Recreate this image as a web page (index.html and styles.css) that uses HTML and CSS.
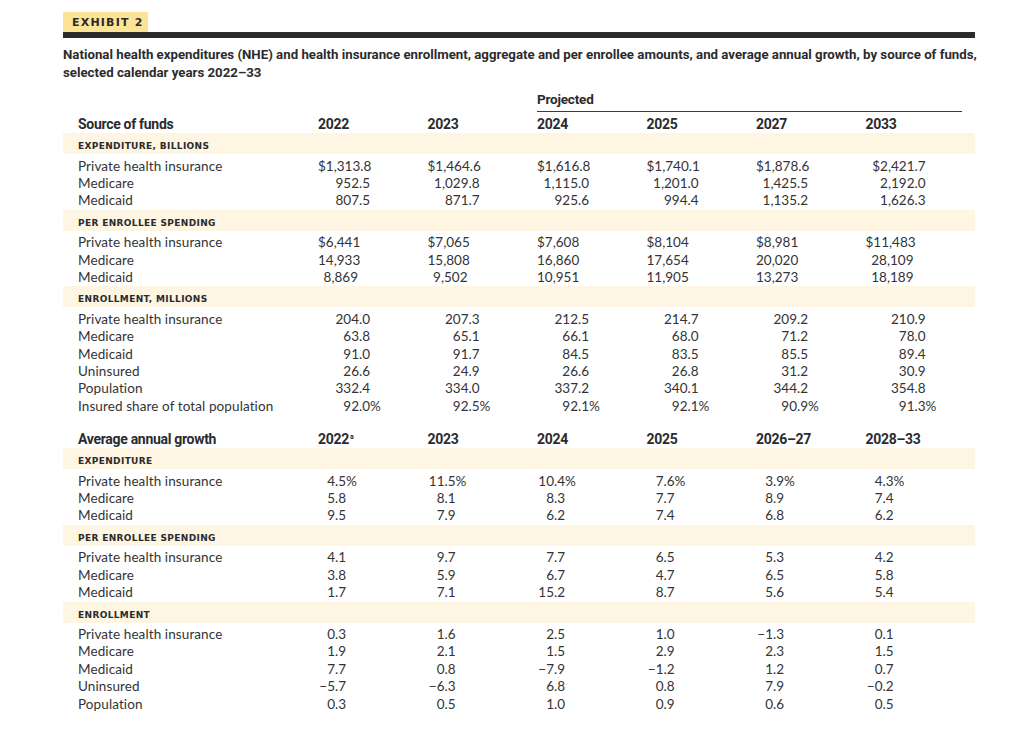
FILE: index.html
```html
<!DOCTYPE html>
<html>
<head>
<meta charset="utf-8">
<link rel="stylesheet" href="styles.css">
</head>
<body>
<div class="page">
  <div class="exhibit"><span class="tag">EXHIBIT 2</span></div>
  <div class="rule"></div>
  <h1 class="title">National health expenditures (NHE) and health insurance enrollment, aggregate and per enrollee amounts, and average annual growth, by source of funds,<br>selected calendar years 2022–33</h1>

  <div class="tbl">
    <div class="row proj"><span class="projected">Projected</span></div>
    <div class="row head"><span>Source of funds</span><span>2022</span><span>2023</span><span>2024</span><span>2025</span><span>2027</span><span>2033</span></div>

    <div class="band">EXPENDITURE, BILLIONS</div>
    <div class="sec dec">
      <div class="row"><span class="lbl">Private health insurance</span><span class="c"><span class="v">$1,313.8</span></span><span class="c"><span class="v">$1,464.6</span></span><span class="c"><span class="v">$1,616.8</span></span><span class="c"><span class="v">$1,740.1</span></span><span class="c"><span class="v">$1,878.6</span></span><span class="c"><span class="v">$2,421.7</span></span></div>
      <div class="row"><span class="lbl">Medicare</span><span class="c"><span class="v">952.5</span></span><span class="c"><span class="v">1,029.8</span></span><span class="c"><span class="v">1,115.0</span></span><span class="c"><span class="v">1,201.0</span></span><span class="c"><span class="v">1,425.5</span></span><span class="c"><span class="v">2,192.0</span></span></div>
      <div class="row"><span class="lbl">Medicaid</span><span class="c"><span class="v">807.5</span></span><span class="c"><span class="v">871.7</span></span><span class="c"><span class="v">925.6</span></span><span class="c"><span class="v">994.4</span></span><span class="c"><span class="v">1,135.2</span></span><span class="c"><span class="v">1,626.3</span></span></div>
    </div>

    <div class="band">PER ENROLLEE SPENDING</div>
    <div class="sec int">
      <div class="row"><span class="lbl">Private health insurance</span><span class="c"><span class="v">$6,441</span></span><span class="c"><span class="v">$7,065</span></span><span class="c"><span class="v">$7,608</span></span><span class="c"><span class="v">$8,104</span></span><span class="c"><span class="v">$8,981</span></span><span class="c"><span class="v">$11,483</span></span></div>
      <div class="row"><span class="lbl">Medicare</span><span class="c"><span class="v">14,933</span></span><span class="c"><span class="v">15,808</span></span><span class="c"><span class="v">16,860</span></span><span class="c"><span class="v">17,654</span></span><span class="c"><span class="v">20,020</span></span><span class="c"><span class="v">28,109</span></span></div>
      <div class="row"><span class="lbl">Medicaid</span><span class="c"><span class="v">8,869</span></span><span class="c"><span class="v">9,502</span></span><span class="c"><span class="v">10,951</span></span><span class="c"><span class="v">11,905</span></span><span class="c"><span class="v">13,273</span></span><span class="c"><span class="v">18,189</span></span></div>
    </div>

    <div class="band">ENROLLMENT, MILLIONS</div>
    <div class="sec dec">
      <div class="row"><span class="lbl">Private health insurance</span><span class="c"><span class="v">204.0</span></span><span class="c"><span class="v">207.3</span></span><span class="c"><span class="v">212.5</span></span><span class="c"><span class="v">214.7</span></span><span class="c"><span class="v">209.2</span></span><span class="c"><span class="v">210.9</span></span></div>
      <div class="row"><span class="lbl">Medicare</span><span class="c"><span class="v">63.8</span></span><span class="c"><span class="v">65.1</span></span><span class="c"><span class="v">66.1</span></span><span class="c"><span class="v">68.0</span></span><span class="c"><span class="v">71.2</span></span><span class="c"><span class="v">78.0</span></span></div>
      <div class="row"><span class="lbl">Medicaid</span><span class="c"><span class="v">91.0</span></span><span class="c"><span class="v">91.7</span></span><span class="c"><span class="v">84.5</span></span><span class="c"><span class="v">83.5</span></span><span class="c"><span class="v">85.5</span></span><span class="c"><span class="v">89.4</span></span></div>
      <div class="row"><span class="lbl">Uninsured</span><span class="c"><span class="v">26.6</span></span><span class="c"><span class="v">24.9</span></span><span class="c"><span class="v">26.6</span></span><span class="c"><span class="v">26.8</span></span><span class="c"><span class="v">31.2</span></span><span class="c"><span class="v">30.9</span></span></div>
      <div class="row"><span class="lbl">Population</span><span class="c"><span class="v">332.4</span></span><span class="c"><span class="v">334.0</span></span><span class="c"><span class="v">337.2</span></span><span class="c"><span class="v">340.1</span></span><span class="c"><span class="v">344.2</span></span><span class="c"><span class="v">354.8</span></span></div>
      <div class="row"><span class="lbl">Insured share of total population</span><span class="c"><span class="v">92.0</span>%</span><span class="c"><span class="v">92.5</span>%</span><span class="c"><span class="v">92.1</span>%</span><span class="c"><span class="v">92.1</span>%</span><span class="c"><span class="v">90.9</span>%</span><span class="c"><span class="v">91.3</span>%</span></div>
    </div>

    <div class="row head head2"><span>Average annual growth</span><span>2022<sup>a</sup></span><span>2023</span><span>2024</span><span>2025</span><span>2026–27</span><span>2028–33</span></div>

    <div class="band">EXPENDITURE</div>
    <div class="sec gr">
      <div class="row"><span class="lbl">Private health insurance</span><span class="c"><span class="v">4.5</span>%</span><span class="c"><span class="v">11.5</span>%</span><span class="c"><span class="v">10.4</span>%</span><span class="c"><span class="v">7.6</span>%</span><span class="c"><span class="v">3.9</span>%</span><span class="c"><span class="v">4.3</span>%</span></div>
      <div class="row"><span class="lbl">Medicare</span><span class="c"><span class="v">5.8</span></span><span class="c"><span class="v">8.1</span></span><span class="c"><span class="v">8.3</span></span><span class="c"><span class="v">7.7</span></span><span class="c"><span class="v">8.9</span></span><span class="c"><span class="v">7.4</span></span></div>
      <div class="row"><span class="lbl">Medicaid</span><span class="c"><span class="v">9.5</span></span><span class="c"><span class="v">7.9</span></span><span class="c"><span class="v">6.2</span></span><span class="c"><span class="v">7.4</span></span><span class="c"><span class="v">6.8</span></span><span class="c"><span class="v">6.2</span></span></div>
    </div>

    <div class="band">PER ENROLLEE SPENDING</div>
    <div class="sec gr">
      <div class="row"><span class="lbl">Private health insurance</span><span class="c"><span class="v">4.1</span></span><span class="c"><span class="v">9.7</span></span><span class="c"><span class="v">7.7</span></span><span class="c"><span class="v">6.5</span></span><span class="c"><span class="v">5.3</span></span><span class="c"><span class="v">4.2</span></span></div>
      <div class="row"><span class="lbl">Medicare</span><span class="c"><span class="v">3.8</span></span><span class="c"><span class="v">5.9</span></span><span class="c"><span class="v">6.7</span></span><span class="c"><span class="v">4.7</span></span><span class="c"><span class="v">6.5</span></span><span class="c"><span class="v">5.8</span></span></div>
      <div class="row"><span class="lbl">Medicaid</span><span class="c"><span class="v">1.7</span></span><span class="c"><span class="v">7.1</span></span><span class="c"><span class="v">15.2</span></span><span class="c"><span class="v">8.7</span></span><span class="c"><span class="v">5.6</span></span><span class="c"><span class="v">5.4</span></span></div>
    </div>

    <div class="band">ENROLLMENT</div>
    <div class="sec gr">
      <div class="row"><span class="lbl">Private health insurance</span><span class="c"><span class="v">0.3</span></span><span class="c"><span class="v">1.6</span></span><span class="c"><span class="v">2.5</span></span><span class="c"><span class="v">1.0</span></span><span class="c"><span class="v">−1.3</span></span><span class="c"><span class="v">0.1</span></span></div>
      <div class="row"><span class="lbl">Medicare</span><span class="c"><span class="v">1.9</span></span><span class="c"><span class="v">2.1</span></span><span class="c"><span class="v">1.5</span></span><span class="c"><span class="v">2.9</span></span><span class="c"><span class="v">2.3</span></span><span class="c"><span class="v">1.5</span></span></div>
      <div class="row"><span class="lbl">Medicaid</span><span class="c"><span class="v">7.7</span></span><span class="c"><span class="v">0.8</span></span><span class="c"><span class="v">−7.9</span></span><span class="c"><span class="v">−1.2</span></span><span class="c"><span class="v">1.2</span></span><span class="c"><span class="v">0.7</span></span></div>
      <div class="row"><span class="lbl">Uninsured</span><span class="c"><span class="v">−5.7</span></span><span class="c"><span class="v">−6.3</span></span><span class="c"><span class="v">6.8</span></span><span class="c"><span class="v">0.8</span></span><span class="c"><span class="v">7.9</span></span><span class="c"><span class="v">−0.2</span></span></div>
      <div class="row"><span class="lbl">Population</span><span class="c"><span class="v">0.3</span></span><span class="c"><span class="v">0.5</span></span><span class="c"><span class="v">1.0</span></span><span class="c"><span class="v">0.9</span></span><span class="c"><span class="v">0.6</span></span><span class="c"><span class="v">0.5</span></span></div>
    </div>
  </div>
</div>
</body>
</html>
```

FILE: styles.css
```css
* { box-sizing: border-box; }
html, body { margin: 0; padding: 0; background: #fff; }
body { font-family: "Lato", "Open Sans", sans-serif; color: #333336; }

.page { width: 912px; margin-left: 63px; padding-top: 12px; }

.exhibit { height: 20px; display: flex; }
.tag {
  background: #fbe496;
  width: 85px;
  height: 20px;
  font-family: "DejaVu Sans", sans-serif;
  font-weight: 700;
  font-size: 11px;
  letter-spacing: 1.2px;
  line-height: 21px;
  padding-left: 9px;
  color: #2a2a2d;
}
.rule { height: 6px; background: #2b2b2f; }

.title {
  margin: 8px 0 0 0;
  font-family: "Roboto", sans-serif;
  font-weight: 700;
  font-size: 13.25px;
  line-height: 18px;
  white-space: nowrap;
  color: #2b2b2e;
}

.tbl { margin-top: 9px; }

.row {
  display: grid;
  grid-template-columns: 240px repeat(6, 109.5px);
  padding-left: 15px;
  height: 17.4px;
  line-height: 17.4px;
  font-size: 13.5px;
  white-space: nowrap;
}

.proj { height: 21px; line-height: 16px; }
.projected {
  grid-column: 4 / 8;
  margin-right: 13px;
  border-bottom: 1px solid #3a3a3a;
  font-family: "Roboto", sans-serif;
  font-weight: 700;
  font-size: 13.5px;
  letter-spacing: -0.2px;
  padding-bottom: 4px;
  color: #2b2b2e;
}

.head {
  height: 21px;
  padding-top: 3px;
  line-height: 18px;
  font-family: "Roboto", sans-serif;
  font-weight: 700;
  font-size: 14px;
  letter-spacing: -0.3px;
  color: #2b2b2e;
}
.head2 { margin-top: 12px; }
.head sup { font-size: 7px; vertical-align: 5px; line-height: 0; margin-left: 1px; }

.band {
  background: #fef5e3;
  height: 21px;
  padding: 8px 0 0 15px;
  line-height: 11px;
  font-family: "DejaVu Sans", sans-serif;
  font-weight: 700;
  font-size: 9px;
  letter-spacing: 0.35px;
  color: #2a2a2d;
}

.sec { padding-top: 3.5px; }

.lbl { letter-spacing: 0.1px; }
.c { display: block; }
.v { display: inline-block; text-align: right; }

.dec .v { width: 52px; }
.dec .c:last-child .v { width: 60px; }
.int .v { width: 40px; }
.int .c:last-child .v { width: 48px; }
.gr .v { width: 28px; }
```
